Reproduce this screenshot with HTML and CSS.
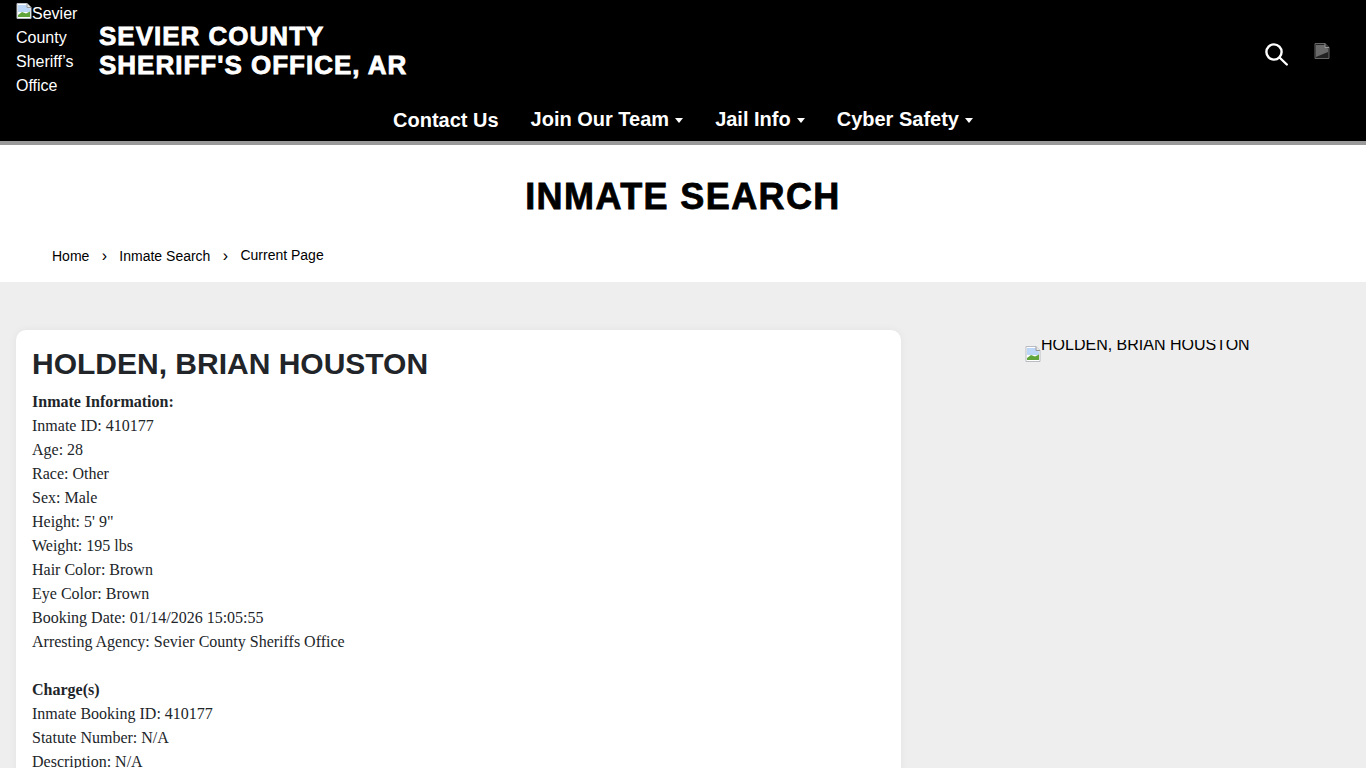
FILE: index.html
```html
<!DOCTYPE html>
<html lang="en">
<head>
<meta charset="utf-8">
<title>Inmate Search</title>
<link rel="stylesheet" href="styles.css">
</head>
<body>
<header class="site-header">
  <div class="brand-row">
    <a class="logo" href="#"><svg class="broken" viewBox="0 0 16 16"><path d="M1 .5h10l4 4v11H1z" fill="#fff" stroke="#b9bcc2"/><path d="M2 2h8.500l3.500 3.500V9H2z" fill="#bcd6f7"/><path d="M2 12l4-3 4 1.500 4-2V14H2z" fill="#5fa53c"/><path d="M11 .5v4h4" fill="#e8e8e8" stroke="#9a9a9a"/></svg>Sevier County Sheriff’s Office</a>
    <h1 class="site-name">SEVIER COUNTY<br>SHERIFF'S OFFICE, AR</h1>
    <div class="tools">
      <svg class="search" viewBox="0 0 24 24" fill="none" stroke="#fff" stroke-width="2.400"><circle cx="10" cy="10" r="7.600"/><path d="M15.500 15.500l7.300 7" stroke-linecap="round"/></svg>
      <svg class="broken dark" viewBox="0 0 16 16"><path d="M1 .5h10l4 4v11H1z" fill="#222" stroke="#666"/><path d="M2 2h8.500l3.500 3.500V9L2 14z" fill="#6a6a6a"/><path d="M11 .5v4h4" fill="#333" stroke="#999"/></svg>
    </div>
  </div>
  <nav class="main-nav">
    <a class="nav-link contact" href="#">Contact Us</a>
    <a class="nav-link" href="#">Join Our Team<span class="caret"></span></a>
    <a class="nav-link" href="#">Jail Info<span class="caret"></span></a>
    <a class="nav-link" href="#">Cyber Safety<span class="caret"></span></a>
  </nav>
</header>
<section class="page-title">
  <h2 class="title">INMATE SEARCH</h2>
  <ol class="crumbs">
    <li><a href="#">Home</a></li>
    <li class="sep">›</li>
    <li><a href="#">Inmate Search</a></li>
    <li class="sep">›</li>
    <li class="current">Current Page</li>
  </ol>
</section>
<main class="content">
  <article class="card">
    <h3 class="name">HOLDEN, BRIAN HOUSTON</h3>
    <p class="info">
      <b>Inmate Information:</b><br>
      Inmate ID: 410177<br>
      Age: 28<br>
      Race: Other<br>
      Sex: Male<br>
      Height: 5' 9"<br>
      Weight: 195 lbs<br>
      Hair Color: Brown<br>
      Eye Color: Brown<br>
      Booking Date: 01/14/2026 15:05:55<br>
      Arresting Agency: Sevier County Sheriffs Office<br>
      <br>
      <b>Charge(s)</b><br>
      Inmate Booking ID: 410177<br>
      Statute Number: N/A<br>
      Description: N/A<br>
    </p>
  </article>
  <aside class="photo">
    <svg class="broken" viewBox="0 0 16 16"><path d="M1 .5h10l4 4v11H1z" fill="#fff" stroke="#b9bcc2"/><path d="M2 2h8.500l3.500 3.500V9H2z" fill="#bcd6f7"/><path d="M2 12l4-3 4 1.500 4-2V14H2z" fill="#5fa53c"/><path d="M11 .5v4h4" fill="#e8e8e8" stroke="#9a9a9a"/></svg>
    <span class="photo-alt">HOLDEN, BRIAN HOUSTON</span>
  </aside>
</main>
</body>
</html>
```
FILE: styles.css
```css
* { box-sizing: border-box; }
html, body { margin: 0; height: 768px; overflow: hidden; }
body { background: #eee; font-family: "Liberation Sans", Arial, sans-serif; color: #000; }
a { color: inherit; text-decoration: none; }

.site-header { height: 145px; background: #000; border-bottom: 4px solid #999; color: #fff; }
.brand-row { display: flex; height: 96px; padding: 2px 36px 0 16px; }
.logo { width: 67px; flex: none; font-size: 16px; line-height: 24px; }
.broken { width: 16px; height: 16px; display: inline-block; }
.site-name { margin: 20px 0 0 16px; font-size: 26px; line-height: 29px; font-weight: 700; letter-spacing: 1px; -webkit-text-stroke: 0.8px #fff; }
.tools { margin-left: auto; display: flex; align-items: flex-start; gap: 26px; padding-top: 40px; }
.search { width: 24px; height: 24px; }
.broken.dark { margin-top: 1px; }
.main-nav { display: flex; justify-content: center; gap: 32px; height: 40px; padding-left: 0; font-size: 20px; font-weight: 700; line-height: 24px; }
.nav-link { display: block; padding-top: 11px; }
.nav-link.contact { padding-top: 12px; }
.caret { display: inline-block; margin: 0 0 3px 6px; border-left: 4px solid transparent; border-right: 4px solid transparent; border-top: 5px solid #fff; }

.page-title { height: 137px; background: #fff; padding-top: 29px; }
.title { margin: 0; text-align: center; font-size: 36px; line-height: 46px; font-weight: 700; letter-spacing: 1.400px; -webkit-text-stroke: 0.8px #000; }
.crumbs { display: flex; list-style: none; margin: 0; padding: 26px 0 0 52px; font-size: 14px; line-height: 20px; }
.sep { width: 30px; text-align: center; font-size: 16px; }
.current { margin-top: -1px; }

.content { display: flex; padding: 48px 16px 0; }
.card { width: 885px; height: 600px; flex: none; background: #fff; border-radius: 10px; padding: 16px; box-shadow: 0 0 8px rgba(0,0,0,.05); color: #212529; }
.name { margin: 0 0 8px; font-size: 30px; line-height: 36px; font-weight: 700; }
.info { margin: 0; font-family: "Liberation Serif", "Times New Roman", serif; font-size: 16px; line-height: 24px; }
.photo { display: flex; align-items: flex-start; margin-left: 124px; padding-top: 10px; height: 40px; color: #000; }
.photo .broken { margin-top: 6px; flex: none; }
.photo-alt { display: block; height: 13px; overflow: hidden; font-size: 16px; line-height: 10px; white-space: nowrap; margin-top: 0; }
```
